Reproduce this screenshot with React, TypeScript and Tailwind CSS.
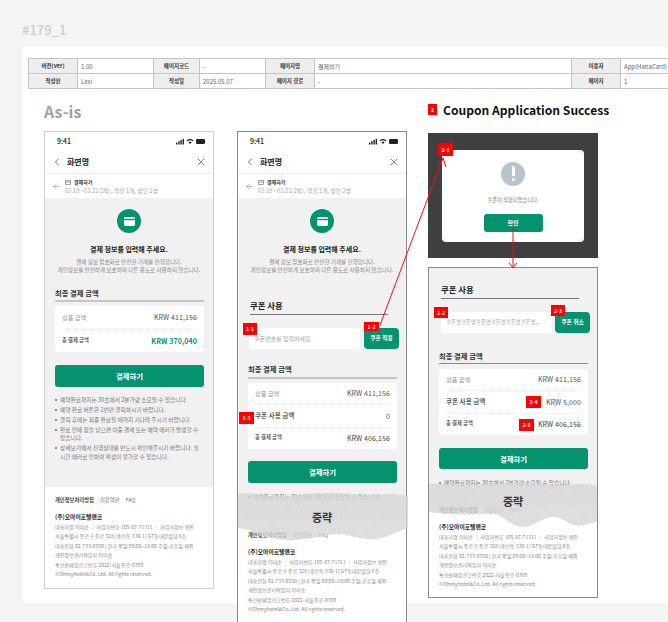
import React from "react";
import { ChevronLeft, X, ArrowLeft } from "lucide-react";

const FONT = "[font-family:'Noto_Sans_CJK_KR','Noto_Sans',sans-serif]";

function Label({ children }: { children: React.ReactNode }) {
  return <div className="flex items-center justify-center bg-[#eeeeee] border-r border-b border-[#c4c4c4] text-[5.5px] font-bold text-[#333]">{children}</div>;
}
function Value({ children }: { children: React.ReactNode }) {
  return <div className="flex items-center pl-[3px] bg-white border-r border-b border-[#c4c4c4] text-[6px] text-[#666] whitespace-nowrap overflow-hidden">{children}</div>;
}

function MetaTable() {
  return (
    <div className="grid w-[640px] grid-cols-[49px_76px_46px_66px_49px_257px_49px_48px] grid-rows-[15px_15px] border-t border-l border-[#c4c4c4]">
      <Label>버전(ver)</Label><Value>1.00</Value><Label>페이지코드</Label><Value>-</Value><Label>페이지명</Label><Value>결제하기</Value><Label>이용자</Label><Value>App(HanaCard)</Value>
      <Label>작성인</Label><Value>Lexi</Value><Label>작성일</Label><Value>2025.05.07</Value><Label>페이지 경로</Label><Value>-</Value><Label>페이지</Label><Value>1</Value>
    </div>
  );
}

function StatusBar() {
  return (
    <div className="flex h-[18px] items-center justify-between pl-[12px] pr-[7px] bg-white">
      <span className="text-[7px] font-medium text-[#222]">9:41</span>
      <svg width="30" height="7" viewBox="0 0 30 7" fill="#222">
        <rect x="0" y="4.5" width="1.4" height="2" /><rect x="2.2" y="3.2" width="1.4" height="3.3" /><rect x="4.4" y="2" width="1.4" height="4.5" /><rect x="6.6" y="0.8" width="1.4" height="5.7" />
        <path d="M10.5 2.4 C12.6 .4 15.4 .4 17.5 2.4 L16.6 3.3 C15 1.9 13 1.9 11.4 3.3 Z M12.4 4.2 C13.4 3.3 14.6 3.3 15.6 4.2 L14 6 Z" />
        <rect x="20" y="1" width="9" height="5" rx="1.2" />
      </svg>
    </div>
  );
}

function Header() {
  return (
    <>
      <div className="flex h-[23px] items-center justify-between bg-white pl-[6px] pr-[6px]">
        <div className="flex items-center">
          <ChevronLeft size={12} strokeWidth={1.3} className="text-[#222]" />
          <span className="ml-[4px] text-[8px] font-bold text-[#222]">화면명</span>
        </div>
        <X size={12} strokeWidth={1.1} className="text-[#222]" />
      </div>
      <div className="flex h-[25px] items-center border-t border-[#eeeeee] bg-white pl-[7px]">
        <ArrowLeft size={9} strokeWidth={1} className="text-[#444]" />
        <div className="ml-[4px]">
          <div className="flex items-center gap-[3px] leading-[8px]">
            <svg width="6" height="5" viewBox="0 0 6 5" fill="none" stroke="#555" strokeWidth="0.6"><rect x="0.4" y="0.4" width="5.2" height="4.2" rx="0.6" /><path d="M0.4 2H5.6" /></svg>
            <span className="text-[5px] font-bold text-[#333]">결제하기</span>
          </div>
          <div className="mt-[1px] text-[5.8px] leading-[7px] text-[#aaa] whitespace-nowrap">03.19 ~03.21(2박), 객실 1개, 성인 2명</div>
        </div>
      </div>
    </>
  );
}

function PayIntro() {
  return (
    <div className="flex h-[77px] flex-col items-center">
      <div className="mt-[11px] flex h-[24px] w-[24px] items-center justify-center rounded-full bg-[#05936f]">
        <svg width="11" height="9" viewBox="0 0 11 9"><rect width="11" height="9" rx="1.6" fill="#fff" /><rect y="1.8" width="11" height="1.4" fill="#05936f" /></svg>
      </div>
      <div className="mt-[10px] h-[12px] text-[7px] font-bold leading-[12px] text-[#222] whitespace-nowrap">결제 정보를 입력해 주세요.</div>
      <div className="mt-[3px] text-center text-[5.6px] leading-[8.3px] text-[#888] whitespace-nowrap">
        결제 정보 암호화로 안전한 거래를 진행합니다.<br />개인정보를 안전하게 보호하며 다른 용도로 사용하지 않습니다.
      </div>
    </div>
  );
}

function SectionTitle({ children }: { children: React.ReactNode }) {
  return <div className="text-[7.3px] font-bold leading-[12px] text-[#333] whitespace-nowrap">{children}</div>;
}

function Row({ label, value, kind = "plain", last }: { label: string; value: string; kind?: "plain" | "strong" | "total" | "green"; last?: boolean }) {
  const labelClass = kind === "strong" ? "text-[6.6px] font-medium text-[#333]" : kind === "plain" ? "text-[6.2px] text-[#999]" : "text-[5.3px] font-medium text-[#444]";
  const valueClass = kind === "green" ? "font-bold text-[#05936f]" : kind === "total" ? "text-[#444]" : "text-[#555]";
  return (
    <div className={`mx-[7px] flex flex-1 items-center justify-between ${last ? "" : "border-b border-dotted border-[#e4e4e4]"}`}>
      <span className={labelClass}>{label}</span>
      <span className={`text-[7px] tracking-[0.1px] ${valueClass}`}>{value}</span>
    </div>
  );
}

function PayButton({ className }: { className: string }) {
  return <div className={`flex w-[149px] items-center justify-center rounded-[3px] bg-[#05936f] text-[7.4px] font-bold text-white ${className}`}>결제하기</div>;
}

const NOTES = ["예약완료까지는 30초에서 2분가량 소요될 수 있습니다.", "예약 완료 버튼은 1번만 클릭하시기 바랍니다.", "클릭 후에는 최종 완료될 때까지 기다려 주시기 바랍니다.", "완료 전에 창을 닫으면 이중 결제 또는 예약 에러가 발생할 수 있습니다.", "상세보기에서 진행상태를 반드시 확인해주시기 바랍니다. 실시간 에러로 인하여 확정이 불가할 수 있습니다."];

function Notes({ count = 5 }: { count?: number }) {
  return (
    <ul className="flex flex-col gap-[1.4px] pr-[4px] text-[5.7px] leading-[8.5px] text-[#777]">
      {NOTES.slice(0, count).map((t) => (
        <li key={t} className="relative pl-[5px]"><span className="absolute left-0 top-[3.4px] h-[1.5px] w-[1.5px] rounded-full bg-[#666]" />{t}</li>
      ))}
    </ul>
  );
}

function Footer({ className }: { className: string }) {
  return (
    <div className={`bg-white pl-[10px] ${className}`}>
      <div className="flex gap-[6px] text-[5.3px] leading-[8px] text-[#777]"><span className="font-bold text-[#444]">개인정보처리방침</span><span>이용약관</span><span>FAQ</span></div>
      <div className="mt-[8px] text-[5.8px] font-bold leading-[9px] text-[#222]">(주)오마이호텔앤코</div>
      <div className="mt-[1px] text-[5.1px] leading-[9.4px] text-[#888] whitespace-nowrap">
        <div>대표자명 이미순 ｜ 사업자번호 105-87-71311 ｜ 사업자정보 확인</div>
        <div>서울특별시 종로구 종로 328 (숭신동 330-1) GT동대문빌딩 6층</div>
        <div>대표전화 02-733-0550 | 한국 평일 09:00~18:00 주말,공휴일 제외</div>
        <div>개인정보관리책임자 이미순</div>
        <div>통신판매업신고번호 2022-서울종로-0399</div>
        <div>©Ohmyhotel&amp;Co. Ltd. All rights reserved.</div>
      </div>
    </div>
  );
}

function Coupon({ placeholder, action, wrap, size }: { placeholder: string; action: string; wrap: string; size: string }) {
  return (
    <div className={`flex ${wrap}`}>
      <div className={`flex h-[21px] w-[111px] shrink-0 items-center rounded-[3px] bg-white pl-[5px] text-[#aaa] whitespace-nowrap overflow-hidden ${size}`}>{placeholder}</div>
      <div className="flex h-[21px] w-[35px] shrink-0 items-center justify-center rounded-[4px] bg-[#05936f] text-[5.8px] font-bold text-white">{action}</div>
    </div>
  );
}

function Hatch({ id, d, text, textY }: { id: string; d: string; text: string; textY: string }) {
  return (
    <div className="absolute left-0 right-0 top-0 h-[52px]">
      <svg width="170" height="52" viewBox="0 0 170 52" className="absolute left-0 top-0">
        <defs>
          <pattern id={id} width="1.6" height="1.6" patternUnits="userSpaceOnUse" patternTransform="rotate(70)">
            <rect width="1.6" height="1.6" fill="#e3e3e3" />
            <rect width="0.8" height="1.6" fill="#c9c9c9" />
          </pattern>
        </defs>
        <path d={d} fill={`url(#${id})`} opacity="0.8" />
      </svg>
      <div className={`absolute left-0 right-0 text-center text-[11px] font-bold leading-[14px] text-[#333] ${textY}`}>{text}</div>
    </div>
  );
}

function Badge({ children, className }: { children: React.ReactNode; className: string }) {
  return <div className={`absolute flex items-center justify-center bg-[#ff0000] text-[5px] font-bold text-white ${className}`}>{children}</div>;
}

function Phone1() {
  return (
    <div className="h-[458px] w-[170px] border border-[#cfcfcf] bg-white">
      <StatusBar /><Header />
      <div className="h-[289px] bg-[#f1f1f1] px-[10px]">
        <PayIntro />
        <div className="mt-[12px]"><SectionTitle>최종 결제 금액</SectionTitle></div>
        <div className="mt-[1px] h-[2px] w-[149px] bg-[#c4c4c4]" />
        <div className="mt-[4px] flex h-[46px] w-[149px] flex-col rounded-[3px] bg-white">
          <Row label="상품 금액" value="KRW 411,156" />
          <Row label="총 결제 금액" value="KRW 370,040" kind="green" last />
        </div>
        <PayButton className="mt-[13px] h-[22px]" />
        <div className="mt-[9px] w-[149px]"><Notes /></div>
      </div>
      <Footer className="pt-[9px]" />
    </div>
  );
}

function Phone2() {
  return (
    <div className="relative h-[520px] w-[170px] border border-[#8a8a8a] bg-white">
      <StatusBar /><Header />
      <div className="h-[340px] bg-[#f1f1f1] px-[10px]">
        <PayIntro />
        <div className="ml-[2px] mt-[24px] w-[138px] border-b border-[#777] pb-[3px] text-[8.4px] font-bold leading-[12px] text-[#222]">쿠폰 사용</div>
        <Coupon placeholder="쿠폰번호를 입력하세요." action="쿠폰 적용" wrap="ml-[1px] mt-[13px] gap-[4px]" size="text-[6px]" />
        <div className="mt-[14px]"><SectionTitle>최종 결제 금액</SectionTitle></div>
        <div className="mt-[2px] h-[2px] w-[149px] bg-[#c4c4c4]" />
        <div className="mt-[4px] flex h-[66px] w-[149px] flex-col rounded-[3px] bg-white">
          <Row label="상품 금액" value="KRW 411,156" />
          <Row label="쿠폰 사용 금액" value="0" kind="strong" />
          <Row label="총 결제 금액" value="KRW 406,156" kind="total" last />
        </div>
        <PayButton className="mt-[12px] h-[22px]" />
        <div className="mt-[10px] w-[160px] whitespace-nowrap"><Notes count={1} /></div>
      </div>
      <div className="absolute left-0 right-0 top-[389px]">
        <Footer className="pt-[10px]" />
      </div>
      <div className="absolute left-0 right-0 top-[358px]">
        <Hatch id="hatch-a" textY="top-[20px]" text="중략" d="M0,4 C18,1 28,8 48,6 S88,1 112,4 S150,1 170,6 L170,38 C156,42 146,51 128,49 S108,42 90,45 S62,52 40,49 S14,39 0,38 Z" />
      </div>
    </div>
  );
}

function Phone3() {
  return (
    <div className="relative h-[331px] w-[170px] overflow-hidden border border-[#8a8a8a] bg-white">
      <div className="h-[260px] bg-[#f1f1f1] px-[10px] pt-[15px]">
        <div className="ml-[2px] w-[138px] border-b border-[#777] pb-[3px] text-[8.4px] font-bold leading-[12px] text-[#222]">쿠폰 사용</div>
        <Coupon placeholder="쿠폰명쿠폰명쿠폰명쿠폰명쿠폰명쿠폰명..." action="쿠폰 취소" wrap="ml-[2px] mt-[13px] gap-[3px]" size="text-[5.4px]" />
        <div className="mt-[17px]"><SectionTitle>최종 결제 금액</SectionTitle></div>
        <div className="mt-[1px] h-[1px] w-[149px] bg-[#888]" />
        <div className="mt-[5px] flex h-[66px] w-[149px] flex-col rounded-[3px] bg-white">
          <Row label="상품 금액" value="KRW 411,156" />
          <Row label="쿠폰 사용 금액" value="KRW 5,000" kind="strong" />
          <Row label="총 결제 금액" value="KRW 406,156" kind="total" last />
        </div>
        <PayButton className="mt-[13px] h-[21px]" />
        <div className="mt-[10px] w-[160px] whitespace-nowrap"><Notes count={1} /></div>
      </div>
      <div className="absolute left-0 right-0 top-[238px]">
        <Footer className="pt-0" />
      </div>
      <div className="absolute left-0 right-0 top-[212px]">
        <Hatch id="hatch-b" textY="top-[14px]" text="중략" d="M0,4 C15,2 30,7 50,5 S95,1 115,4 S150,1 170,6 L170,41 C160,44 152,48 142,44 S130,34 118,38 S100,50 88,46 S75,34 60,34 S30,36 0,32 Z" />
      </div>
    </div>
  );
}

function Dialog() {
  return (
    <div className="flex h-[125px] w-[170px] items-center justify-center bg-[#404040]">
      <div className="flex h-[92px] w-[142px] flex-col items-center rounded-[4px] bg-white pt-[12px]">
        <div className="flex h-[24px] w-[24px] flex-col items-center justify-center gap-[1.5px] rounded-full bg-[#b7c4c9]">
          <div className="h-[10px] w-[3px] rounded-[1.5px] bg-white" />
          <div className="h-[3px] w-[3px] rounded-full bg-white" />
        </div>
        <div className="mt-[10px] text-[5.3px] leading-[8px] text-[#777]">쿠폰이 적용되었습니다.</div>
        <div className="mt-[10px] flex h-[18px] w-[59px] items-center justify-center rounded-[3px] bg-[#05936f] text-[6px] font-bold text-white">확인</div>
      </div>
    </div>
  );
}

export default function App() {
  return (
    <div className={`relative h-[622px] w-[668px] overflow-hidden bg-[#f4f4f4] ${FONT}`}>
      <div className="h-[47px] pl-[22px] pt-[20px] text-[13px] font-medium leading-[20px] text-[#cccccc]">#179_1</div>
      <div className="ml-[22px] h-[556px] bg-white pl-[6px] pt-[11px]">
        <MetaTable />
        <div className="flex">
          <div className="ml-[16px] w-[170px]">
            <div className="h-[42px] pt-[11px] text-[16px] font-bold leading-[22px] text-[#a0a0a0]">As-is</div>
            <Phone1 />
          </div>
          <div className="ml-[23px] w-[170px] pt-[42px]"><Phone2 /></div>
          <div className="ml-[21px] w-[170px]">
            <div className="flex h-[44px] items-start pt-[12px]">
              <span className="mr-[6px] mt-[3px] flex h-[11px] w-[9px] shrink-0 items-center justify-center bg-[#ff0000] text-[5px] font-bold text-white">2</span>
              <span className="text-[12.1px] font-bold leading-[18px] text-[#111] whitespace-nowrap">Coupon Application Success</span>
            </div>
            <Dialog />
            <div className="mt-[9px]"><Phone3 /></div>
          </div>
        </div>
      </div>

      <svg className="absolute left-0 top-0" width="668" height="622" viewBox="0 0 668 622" fill="none" stroke="#ee1111" strokeWidth="1">
        <path d="M380 325 L443 158 M437 165 L443 158 L446 167" />
        <path d="M513 228 L513 268 M509 263 L513 268 L517 263" />
      </svg>

      <Badge className="left-[243px] top-[323px] h-[12px] w-[14px]">1-1</Badge>
      <Badge className="left-[364px] top-[322px] h-[9px] w-[15px]">1-2</Badge>
      <Badge className="left-[239px] top-[412px] h-[12px] w-[15px]">1-3</Badge>
      <Badge className="left-[438px] top-[143px] h-[13px] w-[15px]">2-1</Badge>
      <Badge className="left-[434px] top-[307px] h-[11px] w-[14px]">2-2</Badge>
      <Badge className="left-[551px] top-[305px] h-[11px] w-[14px]">2-3</Badge>
      <Badge className="left-[526px] top-[396px] h-[12px] w-[15px]">2-4</Badge>
      <Badge className="left-[519px] top-[419px] h-[12px] w-[15px]">2-5</Badge>
    </div>
  );
}
